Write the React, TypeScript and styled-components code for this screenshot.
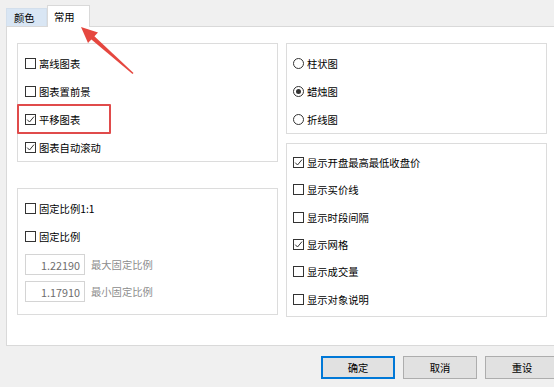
import React from "react";
import styled, {createGlobalStyle} from "styled-components";

const GlobalStyle = createGlobalStyle`
    html, body {
        margin: 0;
        padding: 0;
        overflow: hidden;
        background: #f0f0f0;
    }
    body {
        font-family: "Noto Sans CJK SC", "Microsoft YaHei", sans-serif;
        font-size: 10.3px;
        color: #000;
    }
`

type CheckProps = {
    label: string
    checked?: boolean
    highlight?: boolean
}

const CheckRow = ({label, checked, highlight}: CheckProps) => {
    return (
        <StyledRow>
            {highlight && <StyledHighlight/>}
            <StyledBox>
                {checked && (
                    <svg width="9" height="9" viewBox="0 0 9 9">
                        <polyline points="1.2,4.6 3.5,7 8,1.6" fill="none" stroke="#333" strokeWidth="1"/>
                    </svg>
                )}
            </StyledBox>
            <span>{label}</span>
        </StyledRow>
    )
}

const RadioRow = ({label, checked}: CheckProps) => {
    return (
        <StyledRow>
            <StyledRadio>{checked && <StyledDot/>}</StyledRadio>
            <span>{label}</span>
        </StyledRow>
    )
}

const RatioRow = ({value, label}: { value: string, label: string }) => {
    return (
        <StyledRatioRow>
            <StyledInput>{value}</StyledInput>
            <StyledMuted>{label}</StyledMuted>
        </StyledRatioRow>
    )
}

// the red annotation arrow pointing at the tab
const Arrow = () => (
    <StyledArrow width="554" height="100" viewBox="0 0 554 100">
        <polygon points="133.5,73 132.5,74 89,37.5 92,34" fill="#e5473f"/>
        <polygon points="81,27 98,32.5 88,43" fill="#e5473f"/>
    </StyledArrow>
)

export default function App() {
    return (
        <StyledWindow>
            <GlobalStyle/>

            <StyledTabs>
                <StyledTab>颜色</StyledTab>
                <StyledTab active>常用</StyledTab>
            </StyledTabs>

            <StyledPanel>
                <StyledColumn gap={26}>
                    <StyledGroup height={119}>
                        <CheckRow label="离线图表"/>
                        <CheckRow label="图表置前景"/>
                        <CheckRow label="平移图表" checked highlight/>
                        <CheckRow label="图表自动滚动" checked/>
                    </StyledGroup>
                    <StyledGroup height={127}>
                        <CheckRow label="固定比例1:1"/>
                        <CheckRow label="固定比例"/>
                        <StyledRatios>
                            <RatioRow value="1.22190" label="最大固定比例"/>
                            <RatioRow value="1.17910" label="最小固定比例"/>
                        </StyledRatios>
                    </StyledGroup>
                </StyledColumn>

                <StyledColumn gap={9}>
                    <StyledGroup height={91} inset={6}>
                        <RadioRow label="柱状图"/>
                        <RadioRow label="蜡烛图" checked/>
                        <RadioRow label="折线图"/>
                    </StyledGroup>
                    <StyledGroup height={174} inset={6} row={27.3}>
                        <CheckRow label="显示开盘最高最低收盘价" checked/>
                        <CheckRow label="显示买价线"/>
                        <CheckRow label="显示时段间隔"/>
                        <CheckRow label="显示网格" checked/>
                        <CheckRow label="显示成交量"/>
                        <CheckRow label="显示对象说明"/>
                    </StyledGroup>
                </StyledColumn>
            </StyledPanel>

            <StyledFooter>
                <StyledButton primary>确定</StyledButton>
                <StyledButton>取消</StyledButton>
                <StyledButton>重设</StyledButton>
            </StyledFooter>

            <Arrow/>
        </StyledWindow>
    )
}

const StyledWindow = styled.div`
    position: relative;
    width: 566px;
    height: 387px;
    background: #f0f0f0;
`

const StyledTabs = styled.div`
    display: flex;
    align-items: flex-end;
    height: 26px;
    padding-left: 6px;
`

const StyledTab = styled.div<{ active?: boolean }>`
    position: relative;
    z-index: 1;
    box-sizing: border-box;
    display: flex;
    align-items: center;
    width: ${p => p.active ? 43 : 41}px;
    height: ${p => p.active ? 22 : 18}px;
    padding-left: ${p => p.active ? 6 : 7}px;
    margin-bottom: ${p => p.active ? -1 : 0}px;
    background: ${p => p.active ? "#fff" : "#d9e6f4"};
    border: 1px solid ${p => p.active ? "#d9d9d9" : "#d3dfec"};
    border-bottom: none;
`

const StyledPanel = styled.div`
    box-sizing: border-box;
    display: grid;
    grid-template-columns: 261px 261px;
    column-gap: 8px;
    align-items: start;
    margin-left: 6px;
    height: 320px;
    padding: 16px 10px;
    background: #fff;
    border: 1px solid #d9d9d9;
`

const StyledColumn = styled.div<{ gap: number }>`
    display: flex;
    flex-direction: column;
    gap: ${p => p.gap}px;
`

const StyledGroup = styled.div<{ height: number, inset?: number, row?: number }>`
    --row: ${p => p.row ?? 28}px;
    box-sizing: border-box;
    height: ${p => p.height}px;
    padding: 5px 0 0 ${p => p.inset ?? 7}px;
    border: 1px solid #dcdcdc;
    display: flex;
    flex-direction: column;
`

const StyledRow = styled.div`
    position: relative;
    display: flex;
    align-items: center;
    gap: 3px;
    height: var(--row);
    white-space: nowrap;
`

const StyledHighlight = styled.span`
    position: absolute;
    left: -8px;
    top: calc(50% - 15px);
    width: 94px;
    height: 30px;
    box-sizing: border-box;
    border: 2px solid #e04b4b;
    border-radius: 1px;
`

const StyledBox = styled.span`
    box-sizing: border-box;
    display: flex;
    align-items: center;
    justify-content: center;
    width: 11px;
    height: 11px;
    border: 1px solid #333;
    background: #fff;
`

const StyledRadio = styled.span`
    box-sizing: border-box;
    display: flex;
    align-items: center;
    justify-content: center;
    width: 11px;
    height: 11px;
    border: 1px solid #333;
    border-radius: 50%;
`

const StyledDot = styled.span`
    width: 5px;
    height: 5px;
    border-radius: 50%;
    background: #333;
`

const StyledRatios = styled.div`
    display: flex;
    flex-direction: column;
    gap: 6px;
    margin-top: 4px;
`

const StyledRatioRow = styled.div`
    display: flex;
    align-items: center;
    gap: 6px;
`

const StyledInput = styled.span`
    box-sizing: border-box;
    display: flex;
    align-items: center;
    justify-content: flex-end;
    width: 60px;
    height: 21px;
    padding-right: 4px;
    border: 1px solid #d4d4d4;
    color: #6d6d6d;
    font-size: 10.8px;
`

const StyledMuted = styled.span`
    color: #8c8c8c;
`

const StyledFooter = styled.div`
    display: flex;
    justify-content: flex-end;
    gap: 8px;
    padding: 10px 7px 0 0;
`

const StyledButton = styled.button<{ primary?: boolean }>`
    box-sizing: border-box;
    width: 74px;
    height: 23px;
    padding: 0;
    font: inherit;
    color: #000;
    background: #e1e1e1;
    border: 1px solid ${p => p.primary ? "#0078d7" : "#adadad"};
    box-shadow: ${p => p.primary ? "inset 0 0 0 1px #0078d7" : "none"};
`

const StyledArrow = styled.svg`
    position: absolute;
    left: 0;
    top: 0;
    pointer-events: none;
`
